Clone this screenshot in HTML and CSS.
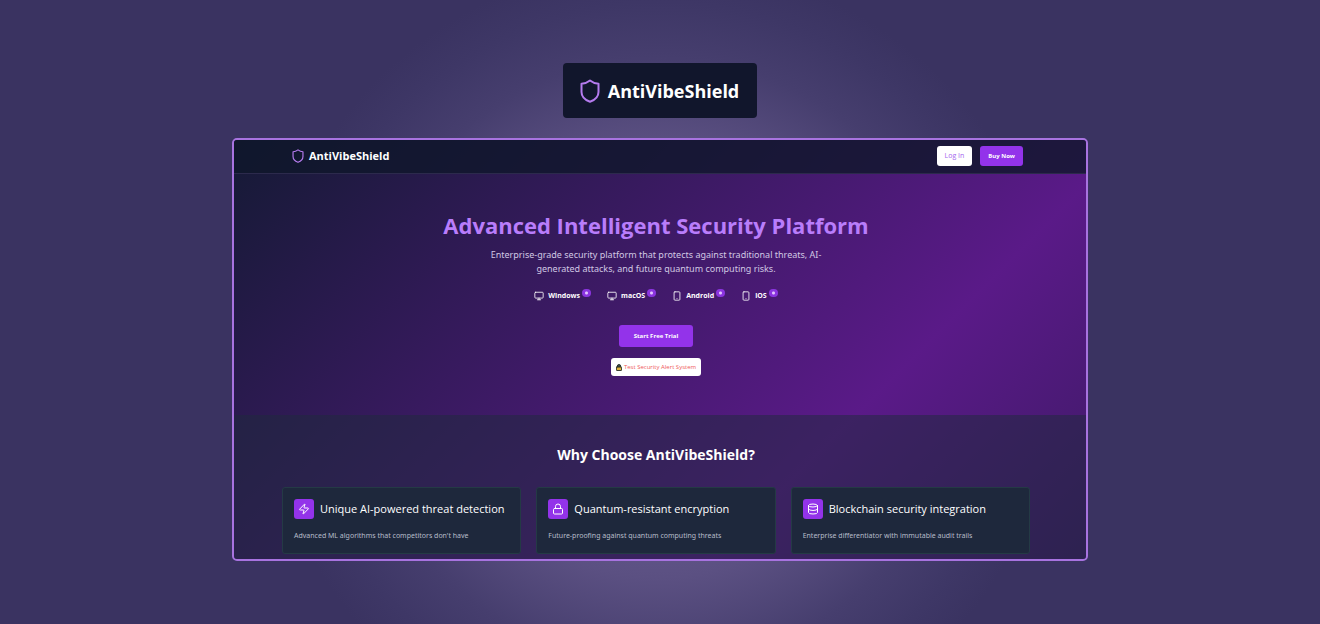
FILE: index.html
```
<!DOCTYPE html>
<html lang="en">
<head>
    <meta charset="UTF-8" />
    <meta name="viewport" content="width=device-width, initial-scale=1.0" />
    <title>AntiVibeShield</title>
    <link rel="stylesheet" href="styles.css">
</head>
<body>
    <div class="brand-badge">
        <svg class="shield" viewBox="0 0 24 24"><path d="M12 1.500C9.500 3.500 6.500 4.700 3.500 4.700v8.300c0 5 3.500 8 8.500 9.800 5-1.800 8.500-4.800 8.500-9.800V4.700c-3 0-6-1.200-8.500-3.200z"/></svg>
        <span>AntiVibeShield</span>
    </div>

    <div class="window">
        <header class="navbar">
            <a class="nav-logo" href="#">
                <svg class="shield" viewBox="0 0 24 24"><path d="M12 1.500C9.500 3.500 6.500 4.700 3.500 4.700v8.300c0 5 3.500 8 8.500 9.800 5-1.800 8.500-4.800 8.500-9.800V4.700c-3 0-6-1.200-8.500-3.200z"/></svg>
                <span>AntiVibeShield</span>
            </a>
            <div class="nav-buttons">
                <button class="btn btn-login">Log In</button>
                <button class="btn btn-buy">Buy Now</button>
            </div>
        </header>

        <section class="hero">
            <h1>Advanced Intelligent Security Platform</h1>
            <p>Enterprise-grade security platform that protects against traditional threats, AI-generated attacks, and future quantum computing risks.</p>
            <ul class="platforms">
                <li>
                    <svg class="icon" viewBox="0 0 24 24"><rect x="2" y="3" width="20" height="14" rx="2"/><path d="M8 21h8M12 17v4"/></svg>
                    <span>Windows</span>
                    <i class="dot"></i>
                </li>
                <li>
                    <svg class="icon" viewBox="0 0 24 24"><rect x="2" y="3" width="20" height="14" rx="2"/><path d="M8 21h8M12 17v4"/></svg>
                    <span>macOS</span>
                    <i class="dot"></i>
                </li>
                <li>
                    <svg class="icon" viewBox="0 0 24 24"><rect x="5" y="2" width="14" height="20" rx="2"/><path d="M12 18h.01"/></svg>
                    <span>Android</span>
                    <i class="dot"></i>
                </li>
                <li>
                    <svg class="icon" viewBox="0 0 24 24"><rect x="5" y="2" width="14" height="20" rx="2"/><path d="M12 18h.01"/></svg>
                    <span>iOS</span>
                    <i class="dot"></i>
                </li>
            </ul>
            <button class="btn btn-trial">Start Free Trial</button>
            <button class="btn btn-test">
                <svg class="lock" viewBox="0 0 14 16"><path d="M3 8V5a4 4 0 0 1 8 0v3z" fill="#3f4f4a" stroke="#1c2620" stroke-width="2"/><rect x="1" y="7" width="12" height="8" rx="1" fill="#e0b23c" stroke="#1c2620"/></svg>
                <span>Test Security Alert System</span>
            </button>
        </section>

        <section class="features">
            <h2>Why Choose AntiVibeShield?</h2>
            <div class="cards">
                <div class="card">
                    <div class="card-head">
                        <div class="card-icon">
                            <svg class="icon" viewBox="0 0 24 24"><path d="M4 14a1 1 0 0 1-.78-1.630l9.900-10.200a.5.5 0 0 1 .86.460l-1.920 6.020A1 1 0 0 0 13 10h7a1 1 0 0 1 .78 1.630l-9.900 10.200a.5.5 0 0 1-.86-.460l1.920-6.020A1 1 0 0 0 11 14z"/></svg>
                        </div>
                        <h3>Unique AI-powered threat detection</h3>
                    </div>
                    <p>Advanced ML algorithms that competitors don't have</p>
                </div>
                <div class="card">
                    <div class="card-head">
                        <div class="card-icon">
                            <svg class="icon" viewBox="0 0 24 24"><rect x="3" y="11" width="18" height="11" rx="2"/><path d="M7 11V7a5 5 0 0 1 10 0v4"/></svg>
                        </div>
                        <h3>Quantum-resistant encryption</h3>
                    </div>
                    <p>Future-proofing against quantum computing threats</p>
                </div>
                <div class="card">
                    <div class="card-head">
                        <div class="card-icon">
                            <svg class="icon" viewBox="0 0 24 24"><ellipse cx="12" cy="5" rx="9" ry="3"/><path d="M3 5v14a9 3 0 0 0 18 0V5M3 12a9 3 0 0 0 18 0"/></svg>
                        </div>
                        <h3>Blockchain security integration</h3>
                    </div>
                    <p>Enterprise differentiator with immutable audit trails</p>
                </div>
            </div>
        </section>
    </div>
</body>
</html>
```
FILE: styles.css
```
* {
    box-sizing: border-box;
}

body {
    margin: 0;
    min-height: 100vh;
    padding: 63px 20px;
    display: flex;
    flex-direction: column;
    align-items: center;
    gap: 20px;
    font-family: "Open Sans", "Noto Sans", sans-serif;
    color: #fff;
    background: radial-gradient(circle 400px at 50% 58%, #7a6ca0 0%, #5b5082 54%, #463e6e 76%, #3e3766 90%, #3a3361 100%) #3a3361;
}

h1, h2, h3, p, ul {
    margin: 0;
    padding: 0;
}

svg {
    fill: none;
    stroke: currentColor;
    stroke-width: 2;
    stroke-linecap: round;
    stroke-linejoin: round;
}

.shield {
    color: #b57bee;
}

.brand-badge {
    display: flex;
    align-items: center;
    gap: 6px;
    height: 55px;
    padding: 0 18px 0 15px;
    border-radius: 4px;
    background: #11162c;
    font-size: 18px;
    font-weight: 700;
}

.brand-badge .shield {
    width: 24px;
    height: 24px;
}

.window {
    width: 100%;
    max-width: 856px;
    border: 2px solid #a873e0;
    border-radius: 5px;
    overflow: hidden;
    background: linear-gradient(135deg, #151a35 0, #5a1a88 634px, #151a35 1268px);
}

.navbar {
    display: flex;
    align-items: center;
    justify-content: space-between;
    height: 34px;
    padding: 0 63px 2px 57px;
    border-bottom: 1px solid #2c2a4c;
    background: rgba(15, 23, 42, 0.8);
}

.nav-logo {
    display: flex;
    align-items: center;
    gap: 4px;
    color: #fff;
    font-size: 11px;
    font-weight: 700;
    text-decoration: none;
}

.nav-logo .shield {
    width: 14px;
    height: 14px;
}

.nav-buttons {
    display: flex;
    gap: 8px;
}

.btn {
    border: none;
    border-radius: 3px;
    font-family: inherit;
    font-size: 6px;
    line-height: 10px;
    font-weight: 700;
    color: #fff;
    background: #9333ea;
    cursor: pointer;
}

.btn-login {
    padding: 5px 8px;
    font-size: 7px;
    font-weight: 400;
    color: #a468ee;
    background: #fff;
}

.btn-buy {
    padding: 5px 8px;
}

.hero {
    display: flex;
    flex-direction: column;
    align-items: center;
    height: 241px;
    padding: 35px 8px 0 0;
    text-align: center;
}

.hero h1 {
    color: #b97dfb;
    font-size: 22px;
    line-height: 32px;
    font-weight: 700;
}

.hero p {
    max-width: 344px;
    margin-top: 7px;
    color: #d1c8e3;
    font-family: "Noto Sans", sans-serif;
    font-size: 9px;
    line-height: 14px;
}

.platforms {
    display: flex;
    gap: 16px;
    margin-top: 13px;
    list-style: none;
}

.platforms li {
    display: flex;
    align-items: center;
    gap: 4px;
    font-size: 7px;
    line-height: 12px;
    font-weight: 700;
}

.platforms .icon {
    width: 10px;
    height: 10px;
}

.dot {
    width: 9px;
    height: 8px;
    margin: 0 0 6px -2px;
    border-radius: 4px;
    background: radial-gradient(circle, #e3c4ff 0, #e3c4ff 1px, #8b34e0 2px);
}

.btn-trial {
    margin-top: 22px;
    padding: 6px 15px;
}

.btn-test {
    display: flex;
    align-items: center;
    gap: 2px;
    margin-top: 11px;
    padding: 4px 5px;
    font-weight: 400;
    color: #ef5a5a;
    background: #fff;
}

.lock {
    width: 6px;
    height: 7px;
}

.features {
    padding: 30px 56px 5px 48px;
    background: rgba(30, 41, 59, 0.5);
}

.features h2 {
    font-size: 14px;
    line-height: 20px;
    font-weight: 700;
    text-align: center;
}

.cards {
    display: grid;
    grid-template-columns: repeat(3, 1fr);
    gap: 15px;
    margin-top: 22px;
}

.card {
    padding: 11px;
    border: 1px solid #243a45;
    border-radius: 3px;
    background: #1e283c;
}

.card-head {
    display: flex;
    align-items: center;
    gap: 6px;
}

.card-icon {
    display: flex;
    flex-shrink: 0;
    align-items: center;
    justify-content: center;
    width: 20px;
    height: 20px;
    border-radius: 3px;
    background: #9333ea;
}

.card-icon .icon {
    width: 12px;
    height: 12px;
}

.card h3 {
    font-size: 11px;
    line-height: 16px;
    font-weight: 500;
}

.card p {
    margin-top: 11px;
    color: #b6bdca;
    font-family: "Noto Sans", sans-serif;
    font-size: 7px;
    line-height: 12px;
}
```
